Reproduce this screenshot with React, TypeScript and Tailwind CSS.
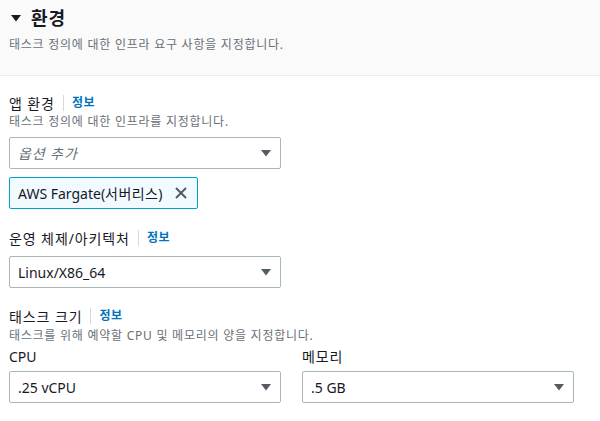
import { type ReactNode } from 'react';

const Caret = ({ className = '' }: { className?: string }) => (
  <svg width="12" height="12" viewBox="0 0 12 12" className={className}>
    <path d="M1 3h10L6 9.5z" fill="currentColor" />
  </svg>
);

const Label = ({ children, info = false, latin = false }: { children: ReactNode; info?: boolean; latin?: boolean }) => (
  <div className="flex items-center h-5 text-[14px] text-[#16191f]">
    <span className={latin ? '' : 'tracking-[0.9px]'}>{children}</span>
    {info && (
      <>
        <span className="mx-[8px] h-[16px] w-px bg-[#d5dbdb]" />
        <span className="text-[12px] font-bold tracking-[0.5px] text-[#0073bb]">정보</span>
      </>
    )}
  </div>
);

const Desc = ({ children, className = '' }: { children: ReactNode; className?: string }) => (
  <p className={`h-4 text-[12px] leading-4 tracking-[0.75px] text-[#687078] whitespace-nowrap ${className}`}>{children}</p>
);

const Select = ({ value, placeholder = false, className = '' }: { value: string; placeholder?: boolean; className?: string }) => (
  <div
    className={`flex h-[32px] items-center justify-between border border-[#aab7b8] rounded-[2px] bg-white pl-[8px] pr-[8px] ${className}`}
  >
    <span className={placeholder ? 'text-[14px] italic tracking-[0.9px] text-[#687078]' : 'text-[14px] text-[#16191f]'}>{value}</span>
    <Caret className="text-[#545b64]" />
  </div>
);

export default function App() {
  return (
    <div className="w-[600px] h-[421px] bg-white overflow-hidden" style={{ fontFamily: '"Noto Sans", "Noto Sans CJK KR", sans-serif' }}>
      <header className="bg-[#fafafa] border-b border-[#eaeded] h-[76px] px-[9px] pt-[6px]">
        <div className="flex items-center h-6 gap-[9px]">
          <Caret className="text-[#16191f] ml-[1px]" />
          <h2 className="text-[18px] font-bold tracking-[1px] text-[#16191f]">환경</h2>
        </div>
        <Desc className="mt-[7px]">태스크 정의에 대한 인프라 요구 사항을 지정합니다.</Desc>
      </header>

      <section className="px-[9px] pt-[17px]">
        <Label info>앱 환경</Label>
        <Desc className="mt-[1px]">태스크 정의에 대한 인프라를 지정합니다.</Desc>
        <Select value="옵션 추가" placeholder className="mt-[7px] w-[272px]" />
        <div className="mt-[8px] inline-flex h-[32px] items-center gap-[12px] border border-[#00a1c9] rounded-[2px] bg-[#f1faff] pl-[8px] pr-[9px]">
          <span className="text-[14px] text-[#16191f]">
            AWS Fargate(<span className="tracking-[0.4px]">서버리스</span>)
          </span>
          <svg width="14" height="14" viewBox="0 0 14 14" className="text-[#545b64]">
            <path d="M2 2l10 10M12 2L2 12" stroke="currentColor" strokeWidth="2" fill="none" />
          </svg>
        </div>

        <div className="mt-[19px]">
          <Label info>운영 체제/아키텍처</Label>
        </div>
        <Select value="Linux/X86_64" className="mt-[8px] w-[272px]" />

        <div className="mt-[18px]">
          <Label info>태스크 크기</Label>
        </div>
        <Desc className="mt-[2px]">태스크를 위해 예약할 CPU 및 메모리의 양을 지정합니다.</Desc>
        <div className="mt-[2px] flex gap-[21px]">
          <div className="w-[272px]">
            <Label latin>CPU</Label>
            <Select value=".25 vCPU" className="mt-[5px]" />
          </div>
          <div className="w-[272px]">
            <Label>메모리</Label>
            <Select value=".5 GB" className="mt-[5px]" />
          </div>
        </div>
      </section>
    </div>
  );
}
